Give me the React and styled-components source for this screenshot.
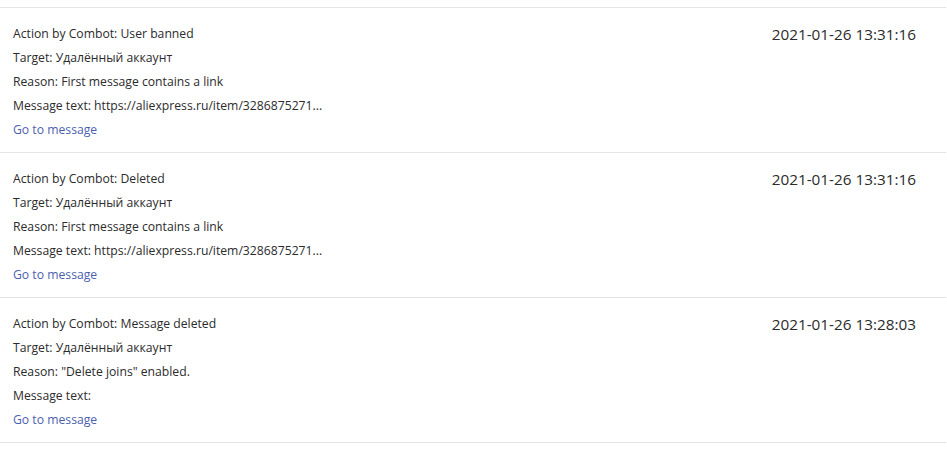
import React from 'react';
import styled, { createGlobalStyle } from 'styled-components';

const GlobalStyle = createGlobalStyle`
    body {
        margin: 0;
        background: #ffffff;
        font-family: 'Open Sans', 'Noto Sans', sans-serif;
    }
`;

const LogList = styled.div`
    padding-top: 7px;
    width: 946px;
`;

const Entry = styled.div`
    display: flex;
    justify-content: space-between;
    align-items: flex-start;
    height: 145px;
    box-sizing: border-box;
    padding: 14px 30px 0 13px;
    border-top: 1px solid #e3e3e3;
    &:last-child {
        height: 146px;
        border-bottom: 1px solid #e3e3e3;
    }
`;

const Details = styled.div`
    display: flex;
    flex-direction: column;
    font-size: 12.2px;
    line-height: 24px;
    color: #2b2b2b;
`;

const Line = styled.div`
    white-space: nowrap;
`;

const MessageLink = styled.a`
    color: #4b5fb0;
    text-decoration: none;
    cursor: pointer;
`;

const Stamp = styled.div`
    font-size: 15.3px;
    line-height: 24px;
    color: #2b2b2b;
`;

const entries = [
    {
        action: 'User banned',
        reason: 'First message contains a link',
        text: 'https://aliexpress.ru/item/3286875271...',
        time: '2021-01-26 13:31:16',
    },
    {
        action: 'Deleted',
        reason: 'First message contains a link',
        text: 'https://aliexpress.ru/item/3286875271...',
        time: '2021-01-26 13:31:16',
    },
    {
        action: 'Message deleted',
        reason: '"Delete joins" enabled.',
        text: '',
        time: '2021-01-26 13:28:03',
    },
];

const App = () => {
    return (
        <>
            <GlobalStyle />
            <LogList>
                {entries.map((e, i) => (
                    <Entry key={i}>
                        <Details>
                            <Line>Action by Combot: {e.action}</Line>
                            <Line>Target: Удалённый аккаунт</Line>
                            <Line>Reason: {e.reason}</Line>
                            <Line>Message text: {e.text}</Line>
                            <Line><MessageLink>Go to message</MessageLink></Line>
                        </Details>
                        <Stamp>{e.time}</Stamp>
                    </Entry>
                ))}
            </LogList>
        </>
    );
};

export default App;
